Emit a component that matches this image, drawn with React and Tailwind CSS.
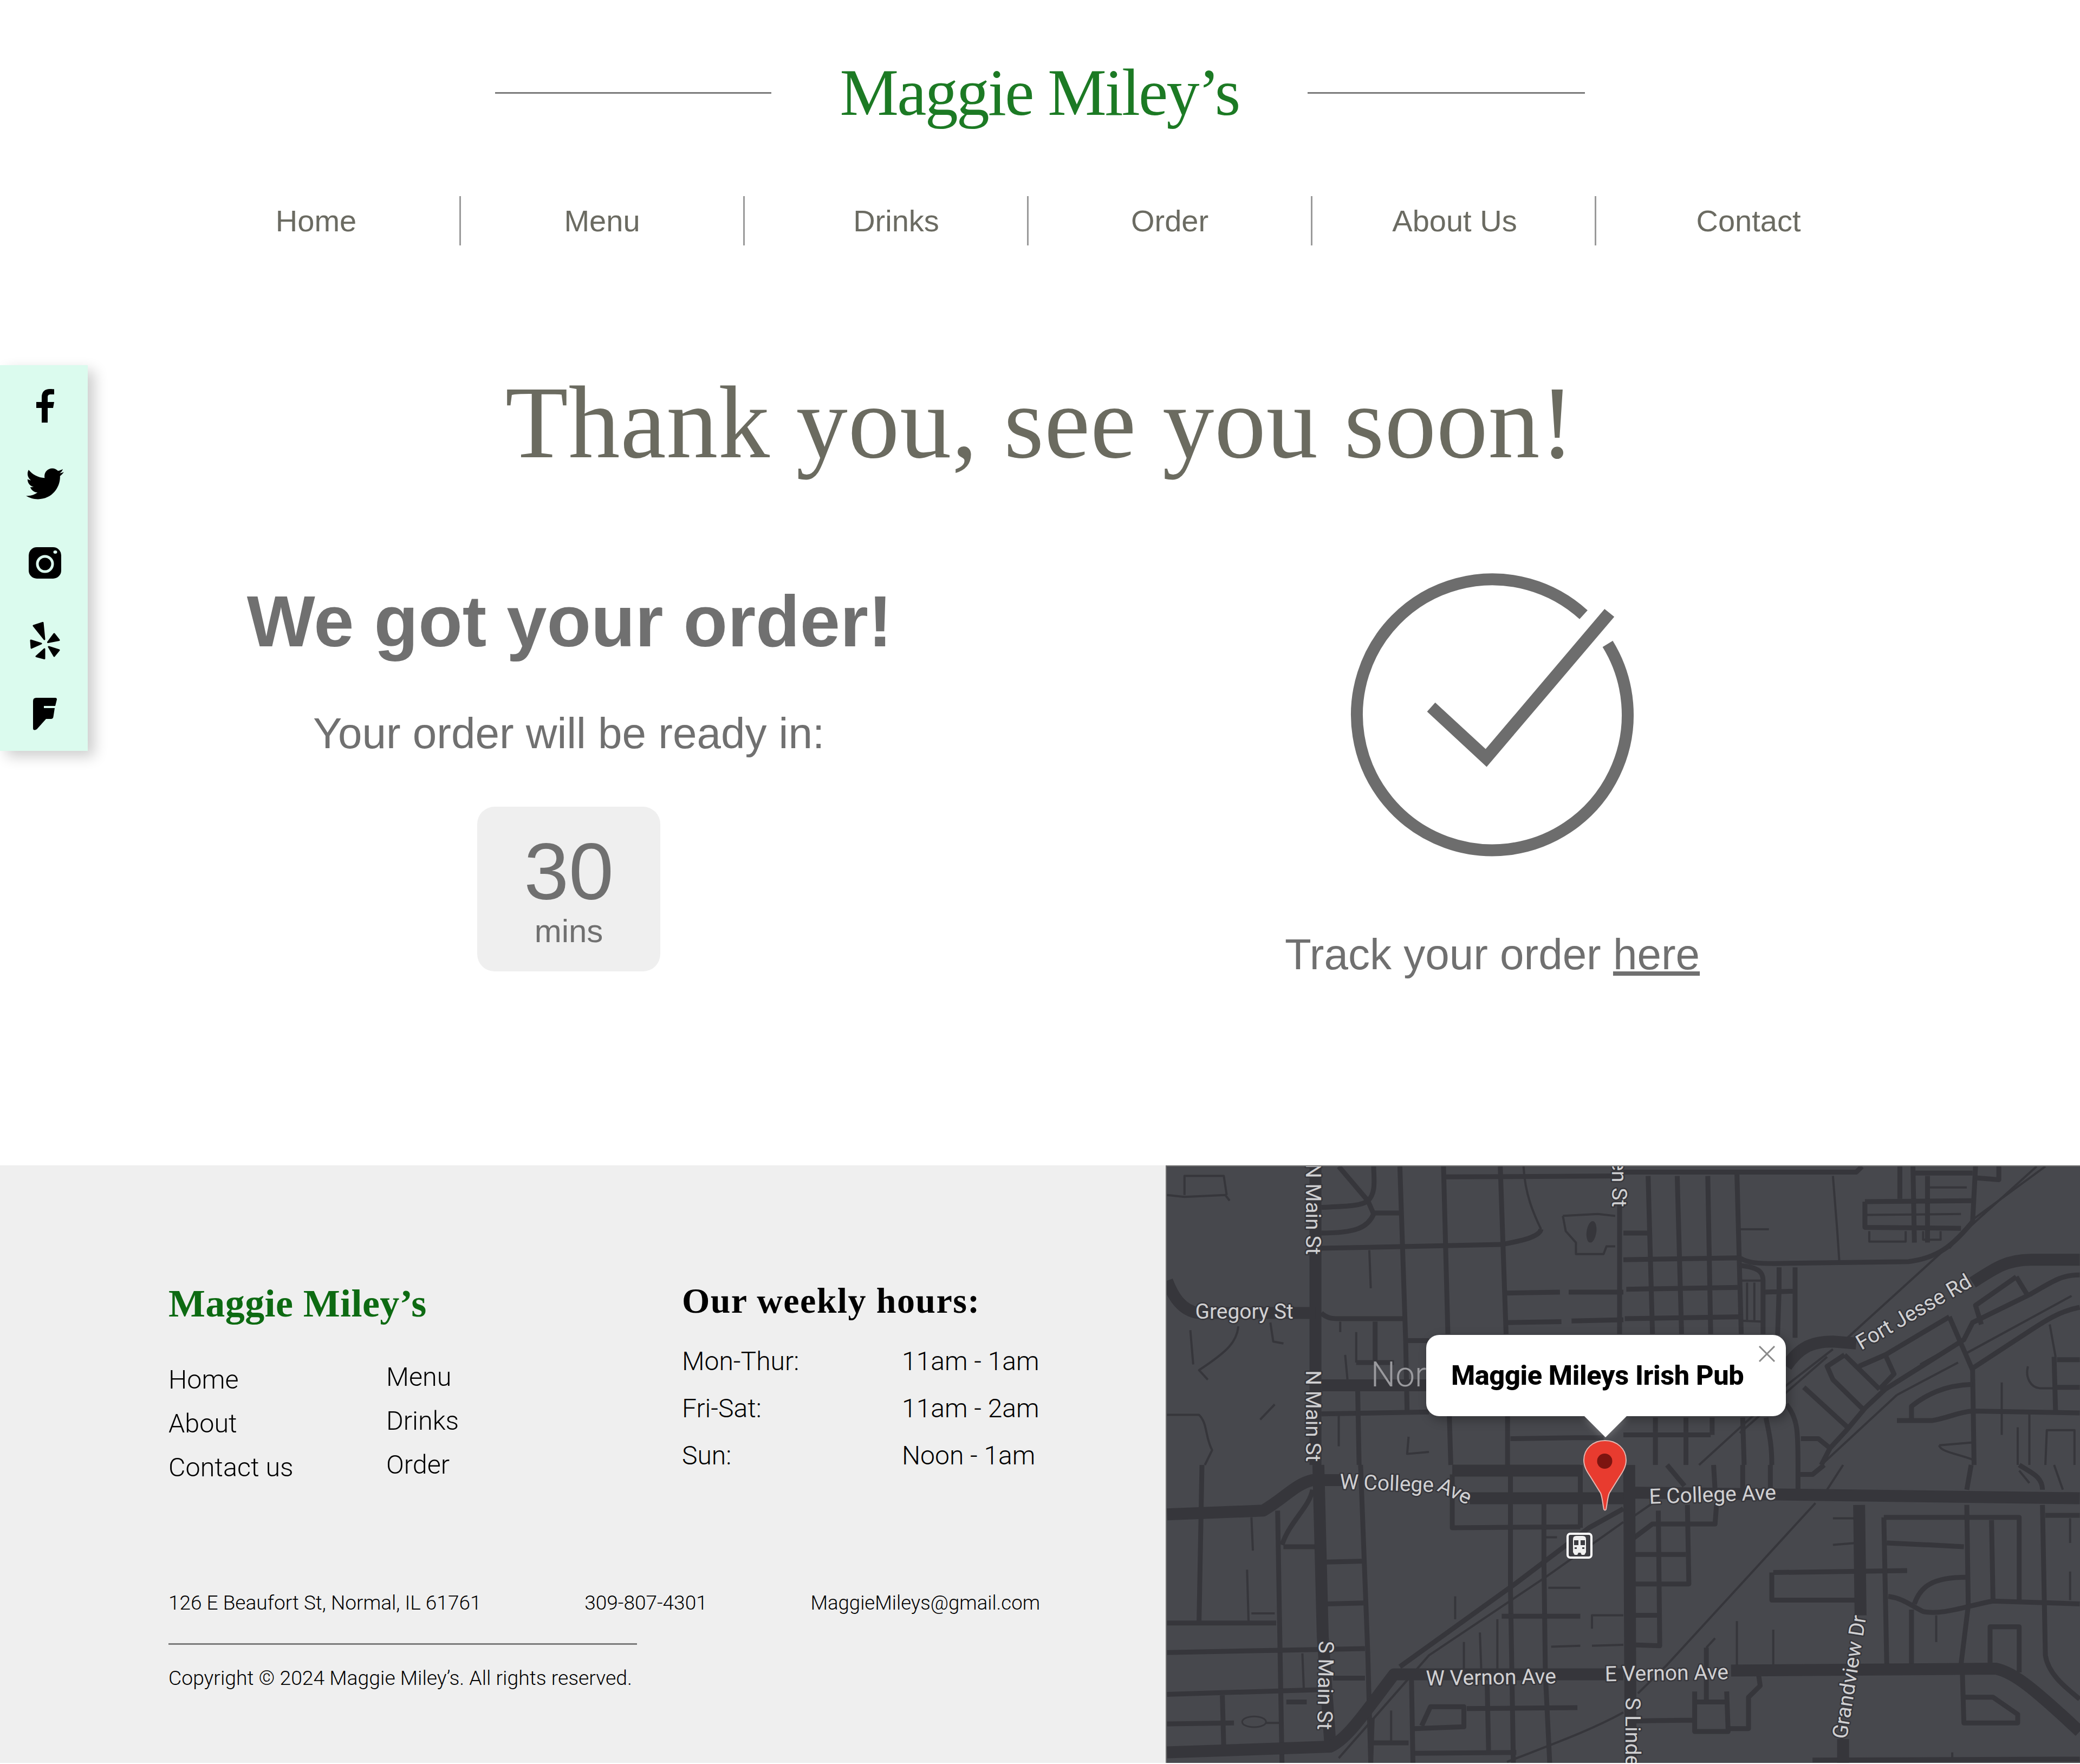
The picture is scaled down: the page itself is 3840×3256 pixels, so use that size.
import { FaTwitter } from "react-icons/fa";

const navItems = [
  { label: "Home", cls: "pr-[8px]" },
  { label: "Menu", cls: "" },
  { label: "Drinks", cls: "pl-[38px]" },
  { label: "Order", cls: "" },
  { label: "About Us", cls: "pl-[4px]" },
  { label: "Contact", cls: "pl-[38px]" },
];

// Roads per map quadrant, traced in crop coords (1568 x 1568 per quadrant)
const roads = [
  {
    x: 0,
    y: 0,
    big: [
      "M510 0L510 1568",
      "M0 600C20 680 50 760 110 770L510 770",
      "M530 1150L900 1150",
    ],
    mid: [
      "M530 430L1150 410C1220 390 1280 370 1285 330",
      "M800 0L820 920L825 1300",
      "M950 0L965 880",
      "M1145 0L1165 880",
      "M955 55L1568 50",
      "M1165 665L1350 660M1380 660L1568 660",
      "M1165 820L1355 815M1390 812L1568 805",
      "M1555 200L1555 880",
      "M530 770C550 800 570 800 600 800L810 800",
      "M530 1300L900 1290",
      "M820 915L900 915",
      "M530 215C600 210 670 210 690 180C720 140 710 60 710 0",
      "M590 0L690 180L710 250C690 320 650 350 530 350",
      "M710 245L800 245",
      "M655 1170L660 1568",
      "M970 1310L975 1568M1170 1310L1170 1568",
      "M1180 1430L1400 1425L1500 1425",
      "M650 1030L780 1030",
      "M715 815L715 1030",
    ],
    thin: [
      "M1285 330C1260 250 1230 150 1225 0",
      "M695 440L700 640",
      "M650 870L650 1030M595 815L595 870M612 990L620 1120",
      "M820 1170L825 1290",
      "M590 1310L590 1470",
      "M0 150L60 160L200 150L215 180M60 150L60 50L195 50L205 150",
      "M80 860L90 1040M245 840C240 920 210 970 110 1070L140 1120",
      "M355 820L365 920L400 930M370 1250L320 1330",
      "M0 1305L110 1305C140 1350 130 1420 155 1490L130 1568",
      "M1360 260L1480 250L1540 260M1360 260L1370 340L1405 400L1405 460L1500 460L1510 420L1540 420",
      "M830 1420L825 1510L900 1500",
    ],
  },
  {
    x: 844,
    y: 0,
    big: [
      "M560 1050C600 960 640 920 720 920L800 930",
      "M1200 610C1280 530 1320 490 1400 490L1568 490",
    ],
    mid: [
      "M0 30L800 30L820 0",
      "M85 50L100 880M185 50L200 880M290 50L300 880M390 30L405 880",
      "M0 350L85 350",
      "M0 490L400 480C430 510 470 510 520 510L980 500C1080 480 1130 420 1200 290L1210 0",
      "M10 645L400 635M5 800L410 790",
      "M400 520C470 530 480 560 480 600L480 880",
      "M535 530L535 650L530 885M590 530L590 900M485 660L590 655",
      "M950 0L950 170M995 0L1000 400M1045 50L1045 400M1000 35L1200 35M1210 60L1290 70L1290 0",
      "M830 185L1200 180M830 185L830 320L1160 325",
      "M1120 790L900 990L810 1050",
      "M1568 740C1500 760 1450 810 1400 860L1200 1060",
      "M1568 570C1500 570 1470 610 1400 670L1200 820L1170 910L900 1170L830 1270L770 1380L710 1480L680 1568",
      "M1120 790L1200 1070L1205 1568",
      "M1350 580L1210 730L1230 830M1350 580L1390 680",
      "M760 990L700 1050L720 1120L820 1270M760 990L800 1050L880 1170M810 1050L900 990L930 1090L880 1170",
      "M620 1160L770 1370",
      "M560 1250C600 1320 600 1400 600 1568",
      "M610 1430L670 1430L710 1480",
      "M940 1335L1060 1335C1120 1320 1150 1290 1200 1285L1568 1295",
      "M990 1330L990 1260C1040 1200 1100 1150 1200 1145",
      "M1480 1000L1485 1290M1490 1015L1568 1015M1490 1160L1568 1160",
      "M0 1410L300 1410M110 1320L110 1568M215 1320L215 1568M305 1320L305 1410M410 1320L415 1568",
      "M490 1320C500 1400 510 1450 510 1568",
    ],
    thin: [
      "M400 330L500 330M720 50L735 340L742 500",
      "M405 600L480 600M425 610L425 810M450 610L450 810M405 810L480 815",
      "M835 255L1160 250M845 340L845 395L970 395L970 340M1030 340L1030 385L1090 385L1090 340M1050 110L1180 110",
      "M1420 0L1130 400L770 900",
      "M1450 0L1200 280L1120 430",
      "M720 960L560 1150L260 1568",
      "M700 1000L550 1200L400 1400",
      "M1020 1040L1150 930M940 1200L1150 1030M1180 980L1540 680",
      "M940 1200L680 1568",
      "M1300 1135L1300 1410M1355 1370L1355 1568M1395 1300L1395 1568M1450 1568L1455 1385L1550 1385L1550 1568",
      "M1390 1050C1380 1110 1400 1160 1430 1165L1480 1165M1465 830L1485 1000",
      "M1085 1465L1200 1450M1085 1465C1090 1500 1150 1510 1200 1540",
    ],
  },
  {
    x: 0,
    y: 552,
    big: [
      "M520 0L535 900L560 1450",
      "M0 260L330 240C400 180 440 100 500 80L600 80",
      "M1040 175L1568 175",
      "M980 30L1420 30",
      "M0 1510L560 1480C620 1440 680 1300 780 1100L830 1100L1568 1100",
    ],
    mid: [
      "M1420 0L1420 330",
      "M380 240L395 1568",
      "M500 130C490 220 420 300 395 420",
      "M400 430L515 430",
      "M665 0L690 1000L700 1568",
      "M120 0L110 820M0 830L375 830M0 985L680 965",
      "M545 510L680 505M550 730L680 725M570 1120L680 1120",
      "M0 1205L530 1180M190 1210L195 1490M410 1245L480 1245",
      "M0 1360L230 1355",
      "M1568 230L1450 330L1200 620L800 1060",
      "M840 1130L845 1568M705 1330L700 1568M700 1460L830 1460",
      "M1180 50L1180 640L1190 1568",
      "M1295 200L1295 500L1300 1100L1315 1568",
      "M980 50L980 330L1420 325",
      "M1150 795L1420 795",
      "M850 1515L1200 1510M1100 1150L1105 1510",
      "M1030 1280L1410 1275M875 1370L905 1270L1020 1270L1020 1375L850 1385",
    ],
    thin: [
      "M290 275L295 450M275 550L280 820M290 780L370 780",
      "M465 990L470 1180",
      "M340 1355L390 1355",
      "M1568 300L1300 590L900 1000L590 1540",
      "M1300 380L1340 380M1310 645L1420 645M1320 955L1420 950M1460 950L1568 945M1460 860L1460 790L1568 790",
      "M1135 810L1135 1080M1020 930L1020 1090M1075 880L1080 1090M990 690L990 810",
      "M770 1290L770 1450",
      "M1168 1560C1300 1480 1450 1400 1568 1300",
    ],
  },
  {
    x: 844,
    y: 552,
    big: [
      "M0 145L1568 175",
      "M20 0L25 1568",
      "M810 210L815 790",
      "M755 1440L755 1568",
      "M370 1080L1280 1070C1340 1090 1400 1160 1568 1400",
    ],
    mid: [
      "M515 565L975 555M510 565L510 710L800 710",
      "M895 275L1360 275L1360 710M895 275L905 1050",
      "M905 410L1050 420L1170 430",
      "M1180 210L1185 740L1160 1050",
      "M1265 290L1270 710",
      "M1440 210L1450 1000C1460 1100 1520 1170 1568 1230",
      "M1450 265L1568 265",
      "M910 690C960 700 990 740 1030 770C1100 790 1180 740 1270 715L1568 730",
      "M1000 730C1020 640 1060 590 1180 590",
      "M990 760L990 1050M1260 1050L1260 850L1360 850L1360 1090",
      "M1165 1100L1170 1355L1355 1355L1355 1310L1270 1220L1170 1220",
      "M120 240L125 950L30 945M220 210L225 625L30 625M320 210L315 310L100 310L30 390",
      "M30 470L215 470M30 790L125 790",
      "M245 1190L245 1400L360 1400L355 1190M245 1245L355 1245M30 1345L245 1340",
      "M465 1105L470 1160L430 1220L430 1385L360 1385",
      "M310 0L315 130M410 0L410 130M505 0L505 130M600 0L600 130M600 50L650 50L690 0",
      "M1195 0L1180 130M1360 0C1400 40 1440 60 1440 130M150 0L210 110",
      "M650 1550L1568 1545",
      "M285 960L285 1240",
    ],
    thin: [
      "M720 280L800 280M720 420L800 410",
      "M1535 280L1535 410M1535 560L1535 710",
      "M1075 790L1075 930",
      "M390 820L390 1060M515 865L515 1050M315 910L285 960",
      "M755 0L700 130M660 200L150 1050L50 1200",
      "M1360 30L1395 95M1480 0L1510 130",
      "M1130 1510L1130 1540",
      "M35 270L120 180",
    ],
  },
];

const labels = [
  { t: "Gregory St", x: 52, y: 282, r: 0 },
  { t: "N Main St", x: 257, y: -6, r: 90 },
  { t: "N Main St", x: 257, y: 377, r: 90 },
  { t: "N Linden St", x: 823, y: -124, r: 90 },
  { t: "W College", x: 319, y: 596, r: 2 },
  { t: "Ave", x: 498, y: 599, r: 25 },
  { t: "E College Ave", x: 892, y: 624, r: -2 },
  { t: "W Vernon Ave", x: 479, y: 960, r: -1 },
  { t: "E Vernon Ave", x: 810, y: 952, r: -1 },
  { t: "S Main St", x: 281, y: 877, r: 91 },
  { t: "S Linden St", x: 848, y: 982, r: 90 },
  { t: "Grandview Dr", x: 1257, y: 1060, r: -81 },
  { t: "Fort Jesse Rd", x: 1284, y: 340, r: -30 },
];

function MapRoads() {
  return (
    <svg
      viewBox="0 0 1688 1103"
      className="absolute inset-0 h-full w-full"
      fill="none"
      strokeLinejoin="round"
    >
      {roads.map((q, i) => (
        <g
          key={i}
          transform={`translate(${q.x} ${q.y}) scale(${844 / 1568} ${552 / 1568})`}
          stroke="#36363b"
        >
          {q.thin.map((d, j) => (
            <path key={j} d={d} strokeWidth="4" vectorEffect="non-scaling-stroke" />
          ))}
          {q.mid.map((d, j) => (
            <path key={j} d={d} strokeWidth="9" vectorEffect="non-scaling-stroke" />
          ))}
          {q.big.map((d, j) => (
            <path key={j} d={d} strokeWidth="22" vectorEffect="non-scaling-stroke" />
          ))}
        </g>
      ))}
      <ellipse cx="785" cy="121" rx="9" ry="20" fill="#36363b" transform="rotate(8 785 121)" />
      <ellipse cx="161" cy="1027" rx="22" ry="10" stroke="#36363b" strokeWidth="3" />
      <text x="377" y="407" fontSize="64" fill="#9a9a9e" fontFamily="Roboto, sans-serif" fontWeight="300">
        Nor
      </text>
      {labels.map((l, i) => (
        <text
          key={i}
          x={l.x}
          y={l.y}
          fontSize="39"
          transform={`rotate(${l.r} ${l.x} ${l.y})`}
          fill="#d0d0d2"
          stroke="#36363b"
          strokeWidth="5"
          fontFamily="Roboto, sans-serif"
          className="[paint-order:stroke]"
        >
          {l.t}
        </text>
      ))}
    </svg>
  );
}

function MapOverlay() {
  return (
    <>
      {/* info bubble */}
      <div className="absolute left-[479px] top-[311px] flex h-[150px] w-[664px] items-center rounded-[24px] bg-white pl-[46px] shadow-[6px_6px_20px_rgba(0,0,0,0.3)]">
        <span className="text-[50.5px] font-extrabold leading-none tracking-[-0.4px] text-black font-['Roboto',sans-serif]">
          Maggie Mileys Irish Pub
        </span>
        <svg viewBox="0 0 32 30" className="absolute left-[613px] top-[20px] h-[30px] w-[32px]" stroke="#8a8a8a" strokeWidth="3">
          <path d="M2 1L30 29M30 1L2 29" />
        </svg>
      </div>
      <svg viewBox="0 0 80 40" className="absolute left-[770px] top-[460px] h-[40px] w-[80px] drop-shadow-[0_0_8px_rgba(255,255,255,0.3)]">
        <path d="M0 0H80L40 40Z" fill="#fff" />
      </svg>
      {/* pin */}
      <svg viewBox="0 0 80 132" className="absolute left-[769px] top-[505px] h-[132px] w-[80px]">
        <path
          d="M40 1C62 1 79 16 79 37C79 50 72 60 66 69L48 98C45 105 44 118 42 128Q40 131 38 128C36 118 35 105 32 98L14 69C8 60 1 50 1 37C1 16 18 1 40 1Z"
          fill="#e83b2f"
          stroke="#e6b8b2"
          strokeWidth="2"
        />
        <circle cx="39.500" cy="39" r="14" fill="#7c1410" />
      </svg>
      {/* transit stop */}
      <svg viewBox="0 0 48 48" className="absolute left-[738px] top-[676px] h-[48px] w-[48px]">
        <rect x="2" y="2" width="44" height="44" rx="5" fill="#3c3c41" stroke="#fff" strokeWidth="4" />
        <path d="M12 12Q12 6 18 6H30Q36 6 36 12V36L33 41H28L26 37H22L20 41H15L12 36Z" fill="#f0f0f0" />
        <path d="M14 14H22V23H14ZM26 14H34V23H26ZM15 27H19V30H15ZM29 27H33V30H29Z" fill="#3c3c41" />
      </svg>
    </>
  );
}

function SocialBar() {
  return (
    <div className="absolute left-0 top-[674px] flex h-[712px] w-[162px] flex-col items-center bg-[#dbfbee] pl-[4px] pt-[44px] shadow-[12px_10px_24px_rgba(0,0,0,0.2)]">
      <svg viewBox="0 0 33 62" className="h-[62px] w-[33px]" fill="#000">
        <path d="M10 62V35H0V24H10V15C10 5 16 0 25 0C29 0 32 .3 33 .5V10H27C22 10 21 12 21 16V24H33L31 35H21V62Z" />
      </svg>
      <FaTwitter className="mt-[78px] h-[70px] w-[70px] text-black" />
      <svg viewBox="0 0 60 58" className="mt-[82px] h-[58px] w-[60px]">
        <rect width="60" height="58" rx="15" fill="#000" />
        <circle cx="30" cy="31" r="14" fill="none" stroke="#dbfbee" strokeWidth="5" />
        <ellipse cx="49" cy="9" rx="3.5" ry="3" fill="#dbfbee" />
      </svg>
      <svg viewBox="0 0 56 69" className="mt-[80px] h-[69px] w-[56px]" fill="#000" stroke="#000" strokeWidth="3" strokeLinejoin="round">
        <path d="M7 7L24 1.5L27 32ZM33.500 37.500L45 22L54 33.500ZM35 46L54 52L45 63ZM27 50V67.500L12 63.500ZM2 34L21 40L3 48Z" />
      </svg>
      <svg viewBox="0 0 44 60" className="mt-[71px] h-[60px] w-[44px]" fill="#000">
        <path d="M0 6Q0 0 6 0H41Q44 0 44 3L41 15H20V19H40L37.500 35Q37 39 33 39H24L7 58Q0 62 0 56Z" />
      </svg>
    </div>
  );
}

function CheckCircle() {
  return (
    <svg viewBox="90 30 540 540" className="ml-[10px] mt-[10px] h-[540px] w-[540px]" fill="#6d6d6d">
      <path
        d="M523.500 112.700A250 250 0 1 0 568 166.500"
        fill="none"
        stroke="#6d6d6d"
        strokeWidth="22"
      />
      <path d="M234.600 291.400L249.600 274.800L342.700 360.600L562.300 102L580.200 116.600L344.600 393.400Z" />
    </svg>
  );
}

export default function App() {
  return (
    <div className="relative flex h-[3256px] w-[3840px] flex-col overflow-hidden bg-white font-['Liberation_Sans',sans-serif]">
      <SocialBar />

      {/* Header */}
      <header className="flex h-[342px] items-center justify-center">
        <div className="h-[3px] w-[510px] bg-[#7a7a7a]" />
        <h1 className="mx-[127px] text-[122px] leading-none tracking-[-2.8px] text-[#1c7a24] font-['Liberation_Serif',serif]">
          Maggie Miley’s
        </h1>
        <div className="h-[3px] w-[512px] bg-[#7a7a7a]" />
      </header>

      <nav className="mt-[20px] flex h-[91px] pl-[327px]">
        {navItems.map((item, i) => (
          <div
            key={item.label}
            className={`flex w-[524px] items-center justify-center text-[56px] text-[#6b6b62] ${item.cls} ${i < 5 ? "border-r-[3px] border-[#9a9a9a]" : ""}`}
          >
            {item.label}
          </div>
        ))}
      </nav>

      <h2 className="mt-[217px] text-center text-[190px] leading-[220px] tracking-[0.7px] text-[#6b6b60] font-['Liberation_Serif',serif]">
        Thank you, see you soon!
      </h2>

      {/* Confirmation */}
      <main className="mt-[152px] flex h-[1109px] text-[#707070]">
        <div className="flex w-[2100px] flex-col items-center pt-[30px]">
          <p className="pl-[3px] text-[133.5px] font-bold leading-[150px]">We got your order!</p>
          <p className="mt-[82px] text-[80px] leading-[100px]">Your order will be ready in:</p>
          <div className="mt-[85px] flex h-[304px] w-[338px] flex-col items-center rounded-[32px] bg-[#efefef] pt-[40px]">
            <span className="text-[149px] leading-[160px]">30</span>
            <span className="-mt-[5px] text-[60px] leading-[70px]">mins</span>
          </div>
        </div>
        <div className="flex w-[1310px] flex-col items-center">
          <CheckCircle />
          <p className="mt-[120px] text-[80px] leading-[100px]">
            Track your order <span className="underline">here</span>
          </p>
        </div>
      </main>

      {/* Footer */}
      <footer className="flex h-[1103px]">
        <div className="w-[2152px] bg-[#efefef] pl-[311px] pt-[210px] text-black font-['Roboto',sans-serif] font-light">
          <div className="flex h-[573px]">
            <div className="w-[948px]">
              <p className="text-[72px] font-bold leading-[90px] tracking-[0.4px] text-[#0d6a12] font-['Liberation_Serif',serif]">
                Maggie Miley’s
              </p>
              <div className="mt-[55px] flex text-[48.5px] leading-[81px]">
                <div className="w-[402px]">
                  <p>Home</p>
                  <p>About</p>
                  <p>Contact us</p>
                </div>
                <div className="-mt-[5px]">
                  <p>Menu</p>
                  <p>Drinks</p>
                  <p>Order</p>
                </div>
              </div>
            </div>
            <div>
              <p className="text-[66px] font-bold leading-[80px] tracking-[1.4px] font-['Liberation_Serif',serif]">
                Our weekly hours:
              </p>
              <div className="mt-[28px] text-[48px] leading-[87px]">
                <div className="flex">
                  <span className="w-[406px]">Mon-Thur:</span>
                  <span>11am - 1am</span>
                </div>
                <div className="flex">
                  <span className="w-[406px]">Fri-Sat:</span>
                  <span>11am - 2am</span>
                </div>
                <div className="flex">
                  <span className="w-[406px]">Sun:</span>
                  <span>Noon - 1am</span>
                </div>
              </div>
            </div>
          </div>
          <div className="flex w-[1609px] justify-between text-[37px] leading-[50px]">
            <span>126 E Beaufort St, Normal, IL 61761</span>
            <span>309-807-4301</span>
            <span className="text-[36.5px]">MaggieMileys@gmail.com</span>
          </div>
          <div className="mt-[49px] h-[3px] w-[865px] bg-[#7a7a7a]" />
          <p className="mt-[36px] text-[37.3px] leading-[50px]">
            Copyright © 2024 Maggie Miley’s. All rights reserved.
          </p>
        </div>

        <div className="relative w-[1688px] overflow-hidden border-l-2 border-t-2 border-[#707070] bg-[#47484d]">
          <MapRoads />
          <MapOverlay />
        </div>
      </footer>
    </div>
  );
}
